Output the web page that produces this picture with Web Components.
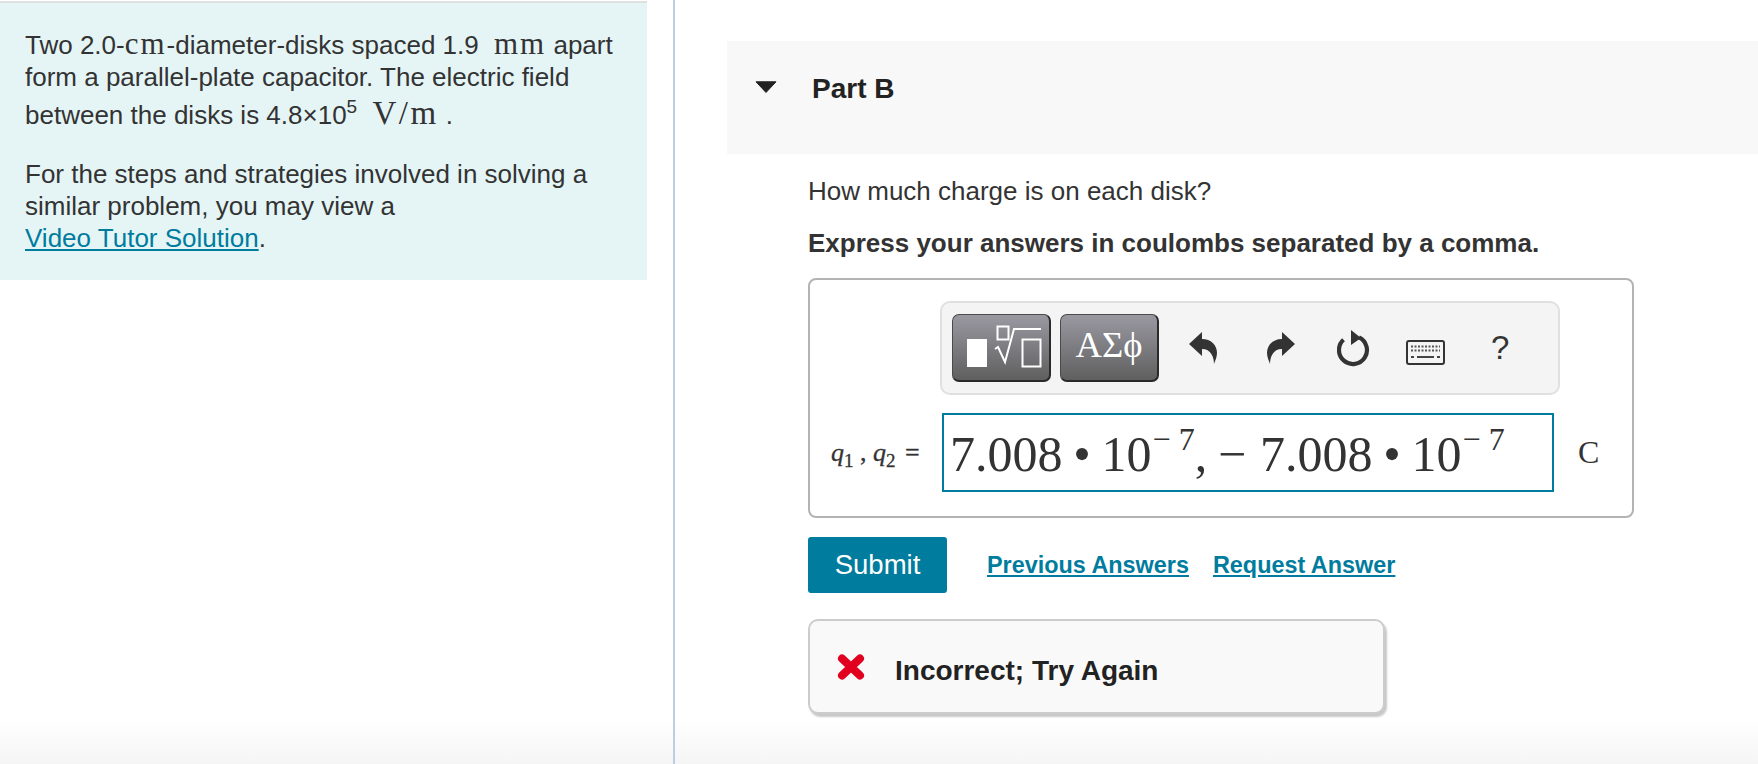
<!DOCTYPE html>
<html lang="en">
<head>
<meta charset="utf-8">
<title>Part B</title>
<style>
    html, body { margin: 0; height: 100%; }
    body {
        width: 1758px;
        height: 764px;
        overflow: hidden;
        font-family: "Liberation Sans", Arial, sans-serif;
        color: #333;
        background: linear-gradient(to bottom, #fff 720px, #f5f5f5 764px);
    }
</style>
</head>
<body>

<quiz-page>
    <problem-intro slot="left">
        <div>Two 2.0-<serif-math>cm</serif-math>-diameter-disks spaced 1.9 <serif-math pad>mm</serif-math> apart</div>
        <div>form a parallel-plate capacitor. The electric field</div>
        <div style="margin-top:4px">between the disks is 4.8×10<sup style="font-size:19px;line-height:0;vertical-align:11px">5</sup> <serif-math pad big>V/m</serif-math> .</div>
    </problem-intro>

    <part-header slot="right">Part B</part-header>
    <question-text slot="right" prompt="How much charge is on each disk?" hint="Express your answers in coulombs separated by a comma."></question-text>
    <answer-box slot="right"></answer-box>
    <submit-row slot="right"></submit-row>
    <feedback-box slot="right">Incorrect; Try Again</feedback-box>
</quiz-page>

<script>
(() => {

    // small helper, every element below does the same thing on connect
    class Base extends HTMLElement {
        render(html) {
            const template = document.createElement("template");
            template.innerHTML = html.trim();
            this.attachShadow({ mode: "open" }).append(template.content.cloneNode(true));
        }
    }

    class QuizPage extends Base {
        connectedCallback() {
            this.render(`
                <div class="left"><slot name="left"></slot></div>
                <div class="line"></div>
                <div class="right"><slot name="right"></slot></div>
                <style>
                    :host { display: grid; grid-template-columns: 673px 2px 1fr; height: 764px; }
                    .line { background: #bccfe2; }
                    .right { padding: 41px 0 0 52px; min-width: 0; }
                </style>
            `);
        }
    }

    class SerifMath extends Base {
        connectedCallback() {
            this.render(`<slot></slot><style>
                :host { font-family: "Liberation Serif", "Times New Roman", serif; font-size: 31px; letter-spacing: 2px; }
                :host([pad]) { margin-left: 8px; }
                :host([big]) { font-size: 33px; letter-spacing: 2.500px; }
            </style>`);
        }
    }

    class ProblemIntro extends Base {
        connectedCallback() {
            this.render(`
                <div class="box">
                    <div class="text"><slot></slot></div>
                    <p>For the steps and strategies involved in solving a<br>similar problem, you may view a<br><a href="#">Video Tutor Solution</a>.</p>
                </div>
                <style>
                    :host { display: block; padding-top: 1px; }
                    .box {
                        box-sizing: border-box;
                        width: 647px;
                        height: 279px;
                        border-top: 2px solid #e0e0e0;
                        background: #e5f5f6;
                        padding: 25px 0 0 25px;
                        font-size: 26px;
                        line-height: 32px;
                        color: #333;
                    }
                    .text { height: 101px; }
                    p { margin: 29px 0 0; }
                    a { color: #007c9e; }
                </style>
            `);
        }
    }

    class PartHeader extends Base {
        connectedCallback() {
            this.render(`
                <svg width="22" height="12" viewBox="0 0 22 12"><path d="M1 .8H21L11 11.500Z" fill="#222" stroke="#222" stroke-linejoin="round"/></svg>
                <b><slot></slot></b>
                <style>
                    :host { display: flex; align-items: flex-start; height: 113px; background: #f8f8f8; padding-left: 28px; color: #222; }
                    svg { margin-top: 40px; }
                    b { margin: 32px 0 0 35px; font-size: 28px; line-height: 32px; }
                </style>
            `);
        }
    }

    class QuestionText extends Base {
        connectedCallback() {
            this.render(`
                <p></p>
                <p class="hint"></p>
                <style>
                    :host { display: block; padding: 21px 0 0 81px; font-size: 26px; line-height: 32px; color: #333; }
                    p { margin: 0; }
                    .hint { margin-top: 20px; font-weight: bold; }
                </style>
            `);
            const [prompt, hint] = this.shadowRoot.querySelectorAll("p");
            prompt.textContent = this.getAttribute("prompt");
            hint.textContent = this.getAttribute("hint");
        }
    }

    class MathToolbar extends Base {
        connectedCallback() {
            this.render(`
                <button class="tpl" aria-label="templates">
                    <svg width="99" height="68" viewBox="0 0 99 68" fill="none" stroke="#fff" stroke-width="2">
                        <rect x="16" y="26" width="20" height="28" fill="#fff" stroke="none"/>
                        <rect x="46.500" y="13.500" width="11" height="13"/>
                        <path d="M44 36L47 34L54 49L63 16H90"/>
                        <rect x="71.500" y="26.500" width="18" height="27"/>
                    </svg>
                </button>
                <button class="sym"><span>ΑΣϕ</span></button>
                <svg class="undo" width="28" height="32" viewBox="0 0 28 32"><path d="M0 12L13 0V7C22 7 28 13 28 21C28 25 26 29 25 32C25 25 22 17 13 17V24Z" fill="#333"/></svg>
                <svg class="redo" width="28" height="32" viewBox="0 0 28 32"><path d="M28 12L15 0V7C6 7 0 13 0 21C0 25 2 29 3 32C3 25 6 17 15 17V24Z" fill="#333"/></svg>
                <svg class="reset" width="34" height="37" viewBox="0 0 34 37">
                    <path d="M6.500 9.700A14 14 0 1 0 22 7.400" fill="none" stroke="#333" stroke-width="4.200"/>
                    <path d="M14 0L24 8L14 15Z" fill="#333"/>
                </svg>
                <svg class="keys" width="39" height="25" viewBox="0 0 39 25">
                    <rect x="1" y="1" width="37" height="23" rx="2" fill="#f4f4f4" stroke="#333" stroke-width="2"/>
                    <path d="M5 6.500H34M5 10.500H34" stroke="#555" stroke-width="2" stroke-dasharray="2 1.500"/>
                    <path d="M11 17H28M5 17H8M31 17H34" stroke="#444" stroke-width="2"/>
                </svg>
                <span class="help">?</span>
                <style>
                    :host {
                        display: flex;
                        align-items: flex-start;
                        box-sizing: border-box;
                        width: 620px;
                        height: 94px;
                        margin-left: 130px;
                        padding-left: 10px;
                        background: #f4f4f4;
                        border: 2px solid #e0e0e0;
                        border-radius: 10px;
                    }
                    button {
                        box-sizing: border-box;
                        width: 99px;
                        height: 68px;
                        margin-top: 11px;
                        padding: 0;
                        border: 1px solid #4a4a4a;
                        border-bottom: 2px solid #2a2a2a;
                        border-right: 2px solid #2a2a2a;
                        border-radius: 7px;
                        background: linear-gradient(#9a99a2, #5f5f5f);
                        color: #fff;
                        font: 36.500px "Liberation Serif", serif;
                        display: flex;
                        align-items: center;
                        justify-content: center;
                        overflow: hidden;
                    }
                    .sym span { margin-top: -6px; }
                    .tpl svg { flex: none; margin: -1px 0 0 -1px; }
                    .sym { margin-left: 9px; }
                    .undo { margin: 29px 0 0 30px; }
                    .redo { margin: 29px 0 0 50px; }
                    .reset { margin: 27px 0 0 42px; }
                    .keys { margin: 37px 0 0 35px; }
                    .help { margin: 25px 0 0 46px; font-size: 33px; line-height: 40px; color: #333; }
                </style>
            `);
        }
    }

    class AnswerBox extends Base {
        connectedCallback() {
            this.render(`
                <math-toolbar></math-toolbar>
                <div class="row">
                    <span class="label"><i>q</i><sub>1</sub> , <i>q</i><sub>2</sub> <span class="eq">=</span></span>
                    <div class="input">
                        <span>7.008 • 10<sup>− 7</sup>, <span class="minus">−</span> 7.008 • 10<sup>− 7</sup></span>
                    </div>
                    <span class="unit">C</span>
                </div>
                <style>
                    :host {
                        display: block;
                        box-sizing: border-box;
                        width: 826px;
                        height: 240px;
                        margin: 19px 0 0 81px;
                        padding-top: 21px;
                        border: 2px solid #b3b3b3;
                        border-radius: 8px;
                        background: #fff;
                    }
                    .row { display: flex; align-items: center; margin-top: 18px; font-family: "Liberation Serif", serif; color: #333; }
                    .label { box-sizing: border-box; width: 132px; padding-left: 21px; font-size: 26px; -webkit-text-stroke: .3px #333; white-space: nowrap; }
                    .label sub { font-size: 19px; line-height: 0; }
                    .eq { margin-left: 3px; }
                    .input {
                        box-sizing: border-box;
                        width: 612px;
                        height: 79px;
                        padding: 7px 0 0 6px;
                        border: 2px solid #007c9e;
                        font-size: 50px;
                        line-height: 64px;
                        word-spacing: -1.700px;
                        white-space: nowrap;
                    }
                    .minus { margin-right: 3px; }
                    .input sup { font-size: 32px; line-height: 0; vertical-align: 21px; margin-left: 1px; word-spacing: 0; }
                    .unit { margin-left: 24px; font-size: 32px; }
                </style>
            `);
        }
    }

    class SubmitRow extends Base {
        connectedCallback() {
            this.render(`
                <button>Submit</button>
                <a href="#" class="first">Previous Answers</a>
                <a href="#" class="second">Request Answer</a>
                <style>
                    :host { display: flex; align-items: center; margin: 19px 0 0 81px; height: 56px; }
                    button {
                        box-sizing: border-box;
                        width: 139px;
                        height: 56px;
                        border: 0;
                        padding: 0;
                        border-radius: 3px;
                        background: #007c9e;
                        color: #fff;
                        font: 27.500px "Liberation Sans", Arial, sans-serif;
                    }
                    a { color: #007c9e; font-weight: bold; font-size: 23.400px; }
                    .first { margin-left: 40px; }
                    .second { margin-left: 24px; }
                </style>
            `);
        }
    }

    class FeedbackBox extends Base {
        connectedCallback() {
            this.render(`
                <svg width="28" height="26" viewBox="0 0 28 26"><path d="M5 4.500L23 21.500M23 4.500L5 21.500" fill="none" stroke="#e2001f" stroke-width="8" stroke-linecap="round"/></svg>
                <b><slot></slot></b>
                <style>
                    :host {
                        display: flex;
                        align-items: center;
                        box-sizing: border-box;
                        width: 577px;
                        height: 95px;
                        margin: 26px 0 0 81px;
                        padding-left: 27px;
                        border: 2px solid #ccc;
                        border-radius: 10px;
                        background: #f9f9f9;
                        box-shadow: 2px 3px 2px #c8c8c8;
                    }
                    b { margin: 9px 0 0 30px; font-size: 28px; color: #222; }
                </style>
            `);
        }
    }

    customElements.define("quiz-page", QuizPage);
    customElements.define("serif-math", SerifMath);
    customElements.define("problem-intro", ProblemIntro);
    customElements.define("part-header", PartHeader);
    customElements.define("question-text", QuestionText);
    customElements.define("math-toolbar", MathToolbar);
    customElements.define("answer-box", AnswerBox);
    customElements.define("submit-row", SubmitRow);
    customElements.define("feedback-box", FeedbackBox);

})()
</script>
</body>
</html>
